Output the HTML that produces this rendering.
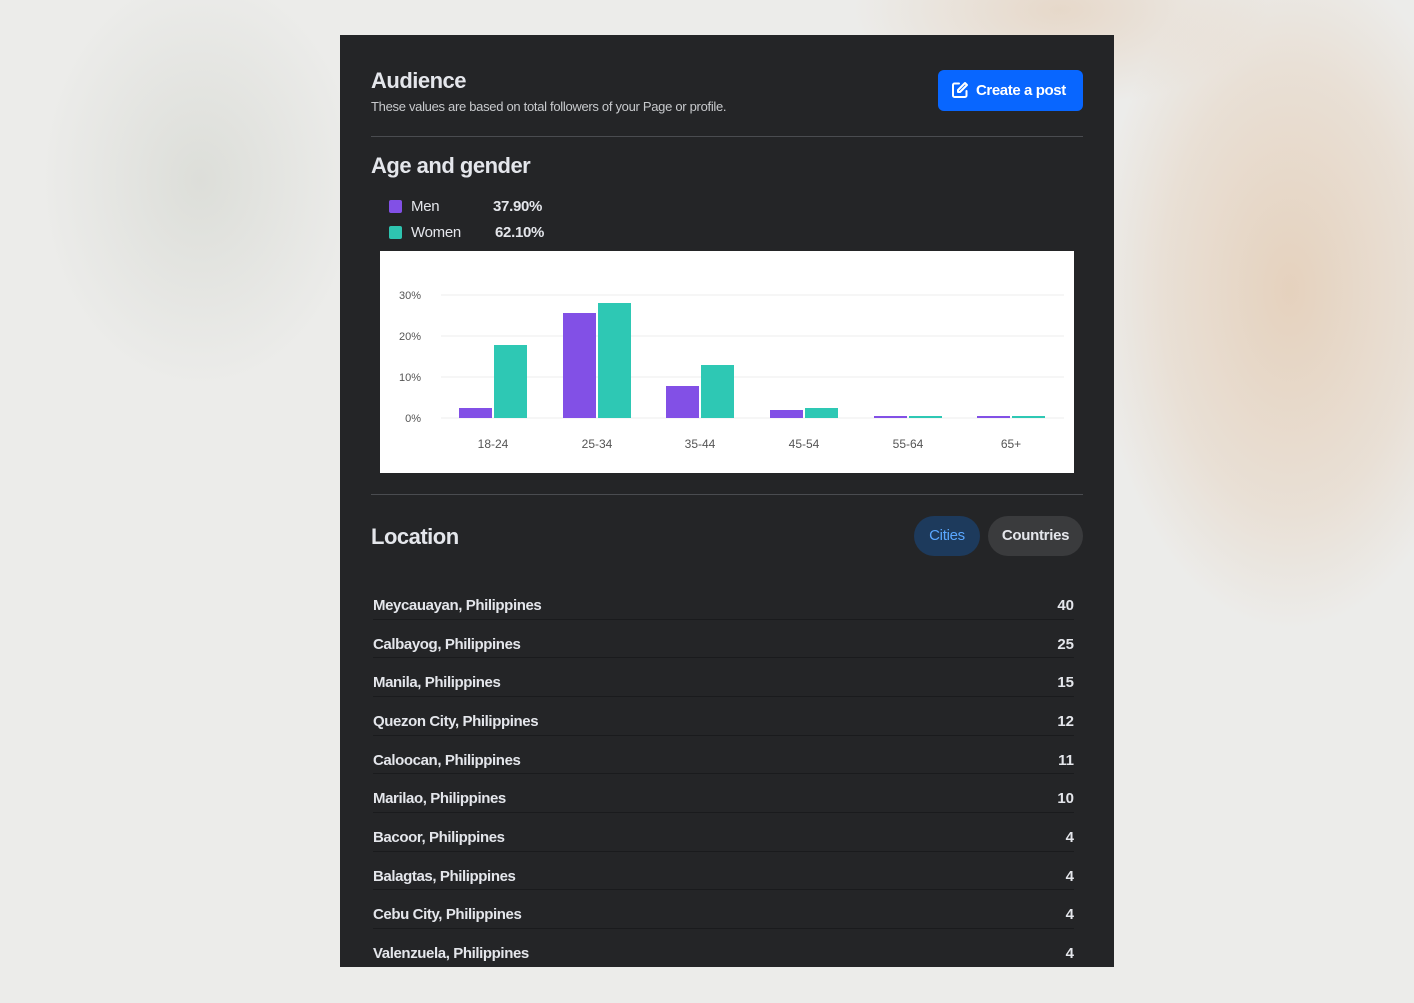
<!DOCTYPE html>
<html><head><meta charset="utf-8"><style>
*{margin:0;padding:0;box-sizing:border-box}
html,body{width:1414px;height:1003px;overflow:hidden}
body{position:relative;font-family:"Liberation Sans",sans-serif;
background:
radial-gradient(ellipse 230px 400px at 1290px 290px,rgba(228,205,182,.85),rgba(228,205,182,.4) 55%,rgba(228,205,182,0) 85%),
radial-gradient(ellipse 260px 120px at 1060px 10px,rgba(228,208,188,.7),rgba(228,208,188,0) 80%),
radial-gradient(ellipse 200px 260px at 200px 180px,rgba(205,208,200,.5),rgba(205,208,200,0) 80%),
#ececea;}
.panel{position:absolute;left:340px;top:35px;width:774px;height:932px;background:#242527;color:#e4e6eb}
.abs{position:absolute;white-space:nowrap}
h1{position:absolute;left:31px;top:33px;font-size:22px;font-weight:bold;letter-spacing:-.5px}
.sub{left:31px;top:64px;font-size:13px;color:#c8cacd;letter-spacing:-.3px}
.btn{left:598px;top:35px;width:145px;height:41px;background:#0866ff;border-radius:6px;color:#fff;font-size:15px;font-weight:bold;letter-spacing:-.4px;padding:12px 0 0 38px}
.btn svg{position:absolute;left:13px;top:11px}
.hr{position:absolute;left:31px;width:712px;height:1px;background:#4a4c50}
h2{position:absolute;left:31px;font-size:22px;font-weight:bold;letter-spacing:-.5px}
.lg{font-size:15px;letter-spacing:-.3px}
.sw{position:absolute;width:13px;height:13px;border-radius:2px}
.chart{position:absolute;left:40px;top:216px;width:694px;height:222px;background:#fff}
.pill{height:40px;border-radius:20px;font-size:15px;font-weight:bold;letter-spacing:-.3px;padding-top:11px;text-align:center}
.row{position:absolute;left:33px;width:701px;height:1px;background:#1a1b1d}
.rt{left:33px;font-size:15px;font-weight:bold;letter-spacing:-.4px;color:#e4e6eb}
.rn{right:40px;font-size:15px;font-weight:bold;color:#e4e6eb}
</style></head><body>
<div class="panel">
<h1>Audience</h1>
<div class="abs sub">These values are based on total followers of your Page or profile.</div>
<div class="abs btn"><svg width="18" height="18" viewBox="0 0 18 18" fill="none" stroke="#fff" stroke-width="2" stroke-linecap="round" stroke-linejoin="round"><path d="M8 2.5H3.5a1.5 1.5 0 0 0-1.5 1.5v10.5a1.5 1.5 0 0 0 1.5 1.5H14a1.5 1.5 0 0 0 1.5-1.5V10"/><path d="M14 2l2 2-7 7H7V9z"/></svg>Create a post</div>
<div class="hr" style="top:101px"></div>
<h2 style="top:118px">Age and gender</h2>
<div class="sw" style="left:49px;top:165px;background:#8250e6"></div>
<div class="abs lg" style="left:71px;top:163px">Men</div>
<div class="abs lg" style="left:153px;top:163px;font-weight:bold">37.90%</div>
<div class="sw" style="left:49px;top:191px;background:#2ec4b0"></div>
<div class="abs lg" style="left:71px;top:189px">Women</div>
<div class="abs lg" style="left:155px;top:189px;font-weight:bold">62.10%</div>
<div class="chart"><svg width="694" height="222" font-family="Liberation Sans,sans-serif" font-size="11" fill="#555">
<g stroke="#eeeeee"><line x1="61" x2="684" y1="44" y2="44"/><line x1="61" x2="684" y1="85" y2="85"/><line x1="61" x2="684" y1="126" y2="126"/><line x1="61" x2="684" y1="167" y2="167"/></g>
<text x="41" y="48" text-anchor="end">30%</text><text x="41" y="89" text-anchor="end">20%</text><text x="41" y="130" text-anchor="end">10%</text><text x="41" y="171" text-anchor="end">0%</text>
<g fill="#8250e6"><rect x="79" y="157" width="33" height="10"/><rect x="183" y="62" width="33" height="105"/><rect x="286" y="135" width="33" height="32"/><rect x="390" y="159" width="33" height="8"/><rect x="494" y="165" width="33" height="2"/><rect x="597" y="165" width="33" height="2"/></g>
<g fill="#2ec8b4"><rect x="114" y="94" width="33" height="73"/><rect x="218" y="52" width="33" height="115"/><rect x="321" y="114" width="33" height="53"/><rect x="425" y="157" width="33" height="10"/><rect x="529" y="165" width="33" height="2"/><rect x="632" y="165" width="33" height="2"/></g>
<g text-anchor="middle" font-size="12"><text x="113" y="197">18-24</text><text x="217" y="197">25-34</text><text x="320" y="197">35-44</text><text x="424" y="197">45-54</text><text x="528" y="197">55-64</text><text x="631" y="197">65+</text></g>
</svg></div>
<div class="hr" style="top:459px"></div>
<h2 style="top:489px">Location</h2>
<div class="abs pill" style="left:574px;top:481px;width:66px;background:#1d3a5c;color:#5aa7ff;font-weight:normal">Cities</div>
<div class="abs pill" style="left:648px;top:481px;width:95px;background:#3a3b3d;color:#e4e6eb">Countries</div>
<div class="abs rt" style="top:562px">Meycauayan, Philippines</div><div class="abs rn" style="top:562px">40</div><div class="row" style="top:584px"></div>
<div class="abs rt" style="top:601px">Calbayog, Philippines</div><div class="abs rn" style="top:601px">25</div><div class="row" style="top:622px"></div>
<div class="abs rt" style="top:639px">Manila, Philippines</div><div class="abs rn" style="top:639px">15</div><div class="row" style="top:661px"></div>
<div class="abs rt" style="top:678px">Quezon City, Philippines</div><div class="abs rn" style="top:678px">12</div><div class="row" style="top:700px"></div>
<div class="abs rt" style="top:717px">Caloocan, Philippines</div><div class="abs rn" style="top:717px">11</div><div class="row" style="top:738px"></div>
<div class="abs rt" style="top:755px">Marilao, Philippines</div><div class="abs rn" style="top:755px">10</div><div class="row" style="top:777px"></div>
<div class="abs rt" style="top:794px">Bacoor, Philippines</div><div class="abs rn" style="top:794px">4</div><div class="row" style="top:816px"></div>
<div class="abs rt" style="top:833px">Balagtas, Philippines</div><div class="abs rn" style="top:833px">4</div><div class="row" style="top:854px"></div>
<div class="abs rt" style="top:871px">Cebu City, Philippines</div><div class="abs rn" style="top:871px">4</div><div class="row" style="top:893px"></div>
<div class="abs rt" style="top:910px">Valenzuela, Philippines</div><div class="abs rn" style="top:910px">4</div>
</div>
</body></html>
